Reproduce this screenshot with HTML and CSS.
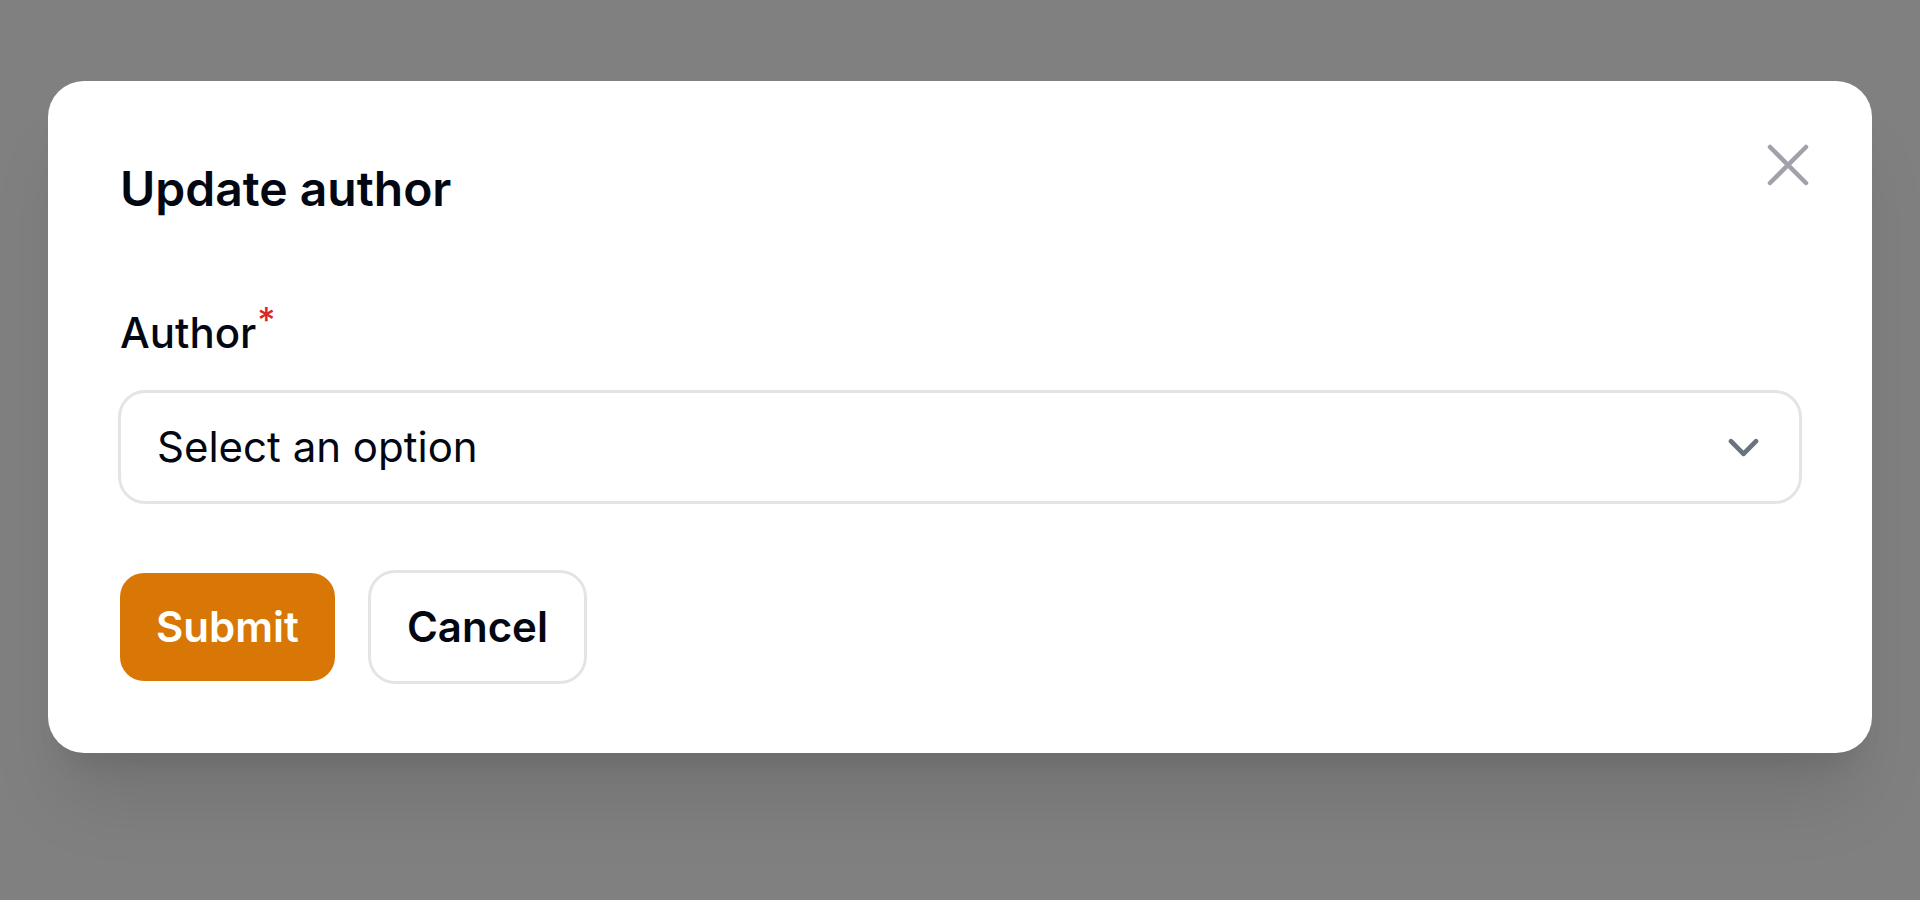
FILE: index.html
```html
<!DOCTYPE html>
<html lang="en">
<head>
<meta charset="utf-8">
<title>Update author</title>
<link rel="stylesheet" href="styles.css">
</head>
<body>
<div class="overlay">
  <div class="modal">
    <button class="close" type="button" aria-label="Close">
      <svg viewBox="0 0 24 24" width="72" height="72" fill="none" stroke="currentColor" stroke-width="1.5" stroke-linecap="round" stroke-linejoin="round"><path d="M6 18 18 6M6 6l12 12"/></svg>
    </button>
    <h2 class="title">Update author</h2>
    <div class="field">
      <label class="label">Author<sup class="req">*</sup></label>
      <div class="select">
        <span class="placeholder">Select an option</span>
        <svg class="chev" viewBox="0 0 20 20" width="63" height="63" fill="none" stroke="#6b7280" stroke-width="1.5" stroke-linecap="round" stroke-linejoin="round"><path d="m6 8 4 4 4-4"/></svg>
      </div>
    </div>
    <div class="actions">
      <button class="btn btn-primary" type="button">Submit</button>
      <button class="btn btn-secondary" type="button">Cancel</button>
    </div>
  </div>
</div>
</body>
</html>
```

FILE: styles.css
```css
html, body {
  margin: 0;
  padding: 0;
  height: 900px;
  overflow: hidden;
}
body {
  background: #808080;
  font-family: Inter, "Noto Sans", "Liberation Sans", sans-serif;
  color: #030712;
}
.overlay {
  padding: 81px 48px 0;
}
.modal {
  position: relative;
  background: #ffffff;
  border-radius: 36px;
  padding: 72px;
  display: flex;
  flex-direction: column;
  gap: 72px;
  box-shadow: 0 60px 75px -15px rgba(0, 0, 0, 0.1), 0 24px 30px -18px rgba(0, 0, 0, 0.1);
}
.close {
  position: absolute;
  top: 48px;
  right: 48px;
  width: 72px;
  height: 72px;
  padding: 0;
  border: 0;
  background: transparent;
  color: #a1a1aa;
  display: flex;
}
.title {
  margin: 0;
  font-size: 48px;
  line-height: 72px;
  font-weight: 600;
  color: #030712;
}
.field {
  display: flex;
  flex-direction: column;
  gap: 24px;
}
.label {
  display: block;
  height: 72px;
  font-size: 42px;
  line-height: 72px;
  font-weight: 500;
  color: #030712;
}
.req {
  color: #dc2626;
  font-weight: 500;
  margin-left: 1px;
  line-height: 0;
}
.select {
  box-sizing: border-box;
  height: 108px;
  margin: 0 1px;
  border-radius: 24px;
  box-shadow: 0 0 0 3px #e4e4e7;
  padding: 0 24px 0 36px;
  display: flex;
  align-items: center;
  justify-content: space-between;
}
.placeholder {
  font-size: 42px;
  line-height: 72px;
  color: #030712;
}
.actions {
  display: flex;
  gap: 36px;
}
.btn {
  box-sizing: border-box;
  height: 108px;
  padding: 0 36px;
  border: 0;
  border-radius: 24px;
  font-family: Inter, "Noto Sans", "Liberation Sans", sans-serif;
  font-size: 42px;
  line-height: 60px;
  font-weight: 600;
}
.btn-primary {
  background: #d97706;
  color: #ffffff;
}
.btn-secondary {
  background: #ffffff;
  color: #030712;
  box-shadow: 0 0 0 3px #e4e4e7;
}
```
